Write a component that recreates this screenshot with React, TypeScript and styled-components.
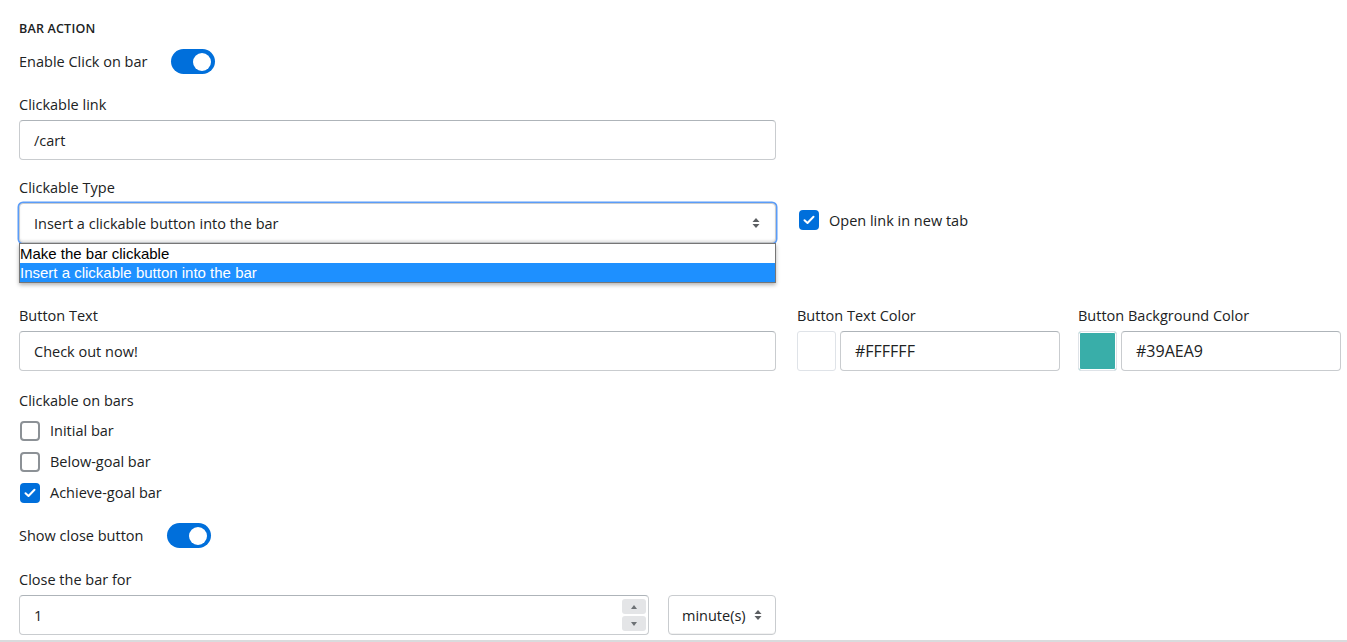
import styled, { createGlobalStyle } from 'styled-components';

const GlobalStyle = createGlobalStyle`
  html, body {
    margin: 0;
    padding: 0;
    background: #ffffff;
  }
  body {
    font-family: "Open Sans", "Noto Sans", sans-serif;
    font-size: 14.5px;
    color: #202223;
  }
  * {
    box-sizing: border-box;
  }
`;

const BLUE = '#006fdb';

function App() {
  return (
    <>
      <GlobalStyle />
      <Page>
        <Heading>BAR ACTION</Heading>

        <ToggleRow $top={12}>
          <span>Enable Click on bar</span>
          <Toggle $on />
        </ToggleRow>

        <Field $top={21} $width={757}>
          <Label>Clickable link</Label>
          <TextBox>/cart</TextBox>
        </Field>

        <TypeRow>
          <Field $width={757}>
            <Label>Clickable Type</Label>
            <SelectWrap>
              <Select $focused>
                <span>Insert a clickable button into the bar</span>
                <Caret />
              </Select>
              <Dropdown>
                <Option>Make the bar clickable</Option>
                <Option $active>Insert a clickable button into the bar</Option>
              </Dropdown>
            </SelectWrap>
          </Field>
          <InlineCheck>
            <Check $checked>
              <Tick />
            </Check>
            <span>Open link in new tab</span>
          </InlineCheck>
        </TypeRow>

        <ButtonRow>
          <Field>
            <Label>Button Text</Label>
            <TextBox>Check out now!</TextBox>
          </Field>
          <Field>
            <Label>Button Text Color</Label>
            <ColorPair>
              <Swatch $color="#FFFFFF" />
              <ColorText>#FFFFFF</ColorText>
            </ColorPair>
          </Field>
          <Field>
            <Label>Button Background Color</Label>
            <ColorPair>
              <Swatch $color="#39AEA9" />
              <ColorText>#39AEA9</ColorText>
            </ColorPair>
          </Field>
        </ButtonRow>

        <Field $top={20}>
          <Label>Clickable on bars</Label>
          <CheckList>
            <CheckItem>
              <Check />
              <span>Initial bar</span>
            </CheckItem>
            <CheckItem>
              <Check />
              <span>Below-goal bar</span>
            </CheckItem>
            <CheckItem>
              <Check $checked>
                <Tick />
              </Check>
              <span>Achieve-goal bar</span>
            </CheckItem>
          </CheckList>
        </Field>

        <ToggleRow $top={15}>
          <span>Show close button</span>
          <Toggle $on />
        </ToggleRow>

        <Field $top={22} $width={757}>
          <Label>Close the bar for</Label>
          <DurationRow>
            <NumberBox>
              <span>1</span>
              <Spinner>
                <SpinButton>
                  <Arrow $dir="up" />
                </SpinButton>
                <SpinButton>
                  <Arrow $dir="down" />
                </SpinButton>
              </Spinner>
            </NumberBox>
            <UnitSelect>
              <span>minute(s)</span>
              <Caret />
            </UnitSelect>
          </DurationRow>
        </Field>
      </Page>
      <Divider />
    </>
  );
}

function Caret() {
  return (
    <CaretSvg width="8" height="12" viewBox="0 0 8 12">
      <path d="M4 1 L7.5 5 H0.5 Z" fill="#5c5f62" />
      <path d="M4 11 L7.5 7 H0.5 Z" fill="#5c5f62" />
    </CaretSvg>
  );
}

function Tick() {
  return (
    <svg width="12" height="10" viewBox="0 0 12 10">
      <path d="M1.5 5.2 L4.5 8 L10.5 1.8" fill="none" stroke="#ffffff" strokeWidth="2" strokeLinecap="round" strokeLinejoin="round" />
    </svg>
  );
}

export default App;

const Page = styled.div`
  padding: 21px 0 0 19px;
  width: 1347px;
  display: flex;
  flex-direction: column;
`;

const Heading = styled.div`
  font-size: 12.5px;
  font-weight: 600;
  letter-spacing: 0.2px;
  line-height: 16px;
  color: #202223;
`;

const ToggleRow = styled.div<{ $top?: number }>`
  display: flex;
  align-items: center;
  gap: 24px;
  height: 25px;
  margin-top: ${(p) => p.$top ?? 0}px;
`;

const Toggle = styled.div<{ $on?: boolean }>`
  position: relative;
  width: 44px;
  height: 25px;
  border-radius: 13px;
  background: ${(p) => (p.$on ? BLUE : '#babfc3')};
  &::after {
    content: '';
    position: absolute;
    top: 3.5px;
    left: ${(p) => (p.$on ? '22px' : '4px')};
    width: 18px;
    height: 18px;
    border-radius: 50%;
    background: #ffffff;
  }
`;

const Field = styled.div<{ $top?: number; $width?: number }>`
  display: flex;
  flex-direction: column;
  margin-top: ${(p) => p.$top ?? 0}px;
  width: ${(p) => (p.$width ? `${p.$width}px` : 'auto')};
`;

const Label = styled.div`
  line-height: 20px;
  margin-bottom: 5px;
  color: #202223;
`;

const TextBox = styled.div`
  height: 40px;
  display: flex;
  align-items: center;
  padding: 0 14px;
  border: 1px solid #c9cccf;
  border-top-color: #aeb4b9;
  border-radius: 4px;
  background: #ffffff;
`;

const TypeRow = styled.div`
  display: flex;
  align-items: flex-start;
  gap: 23px;
  margin-top: 18px;
  height: 128px;
`;

const SelectWrap = styled.div`
  position: relative;
`;

const Select = styled.div<{ $focused?: boolean }>`
  height: 40px;
  display: flex;
  align-items: center;
  justify-content: space-between;
  padding: 0 15px 0 14px;
  border: 1px solid #c9cccf;
  border-radius: 4px;
  background: #ffffff;
  box-shadow: ${(p) =>
    p.$focused ? '0 0 0 1.5px #5a9cf8, inset 0 -2px 2px rgba(0,0,0,0.08)' : 'inset 0 -1px 0 rgba(0,0,0,0.05)'};
`;

const CaretSvg = styled.svg`
  flex: none;
`;

const Dropdown = styled.div`
  position: absolute;
  top: 40px;
  left: 0;
  right: 0;
  background: #ffffff;
  border: 1px solid #767676;
  box-shadow: 0 2px 4px rgba(0, 0, 0, 0.3);
  font-family: "Liberation Sans", Arial, sans-serif;
  font-size: 15px;
  color: #000000;
  z-index: 2;
`;

const Option = styled.div<{ $active?: boolean }>`
  height: 19px;
  line-height: 19px;
  padding-left: 0;
  background: ${(p) => (p.$active ? '#1e90ff' : '#ffffff')};
  color: ${(p) => (p.$active ? '#ffffff' : '#000000')};
`;

const InlineCheck = styled.div`
  display: flex;
  align-items: center;
  gap: 10px;
  margin-top: 32px;
`;

const Check = styled.div<{ $checked?: boolean }>`
  width: 20px;
  height: 20px;
  flex: none;
  border-radius: 4px;
  display: flex;
  align-items: center;
  justify-content: center;
  background: ${(p) => (p.$checked ? BLUE : '#ffffff')};
  border: ${(p) => (p.$checked ? 'none' : '2px solid #8c9196')};
`;

const ButtonRow = styled.div`
  display: grid;
  grid-template-columns: 757px 21px 263px 18px 263px;
  & > :nth-child(1) {
    grid-column: 1;
  }
  & > :nth-child(2) {
    grid-column: 3;
  }
  & > :nth-child(3) {
    grid-column: 5;
  }
`;

const ColorPair = styled.div`
  display: flex;
  gap: 4px;
`;

const Swatch = styled.div<{ $color: string }>`
  width: 39px;
  height: 40px;
  flex: none;
  border-radius: 3px;
  border: 1px solid #dfe3e8;
  background: ${(p) => p.$color};
  box-shadow: inset 0 0 0 1px #ffffff;
`;

const ColorText = styled(TextBox)`
  flex: 1;
  font-size: 16px;
`;

const CheckList = styled.div`
  display: flex;
  flex-direction: column;
  margin-top: -1px;
`;

const CheckItem = styled.div`
  display: flex;
  align-items: center;
  gap: 10px;
  height: 31px;
  padding-left: 1px;
`;

const DurationRow = styled.div`
  display: flex;
  gap: 19px;
`;

const NumberBox = styled(TextBox)`
  flex: 1;
  justify-content: space-between;
  padding-right: 2px;
`;

const Spinner = styled.div`
  display: flex;
  flex-direction: column;
  gap: 2px;
`;

const SpinButton = styled.div`
  width: 24px;
  height: 15px;
  border-radius: 3px;
  background: #e4e5e7;
  display: flex;
  align-items: center;
  justify-content: center;
`;

const Arrow = styled.div<{ $dir: 'up' | 'down' }>`
  width: 0;
  height: 0;
  border-left: 3.5px solid transparent;
  border-right: 3.5px solid transparent;
  ${(p) =>
    p.$dir === 'up' ? 'border-bottom: 4px solid #6d7175;' : 'border-top: 4px solid #6d7175;'}
`;

const UnitSelect = styled(Select)`
  width: 108px;
  flex: none;
  padding: 0 13px 0 13px;
`;

const Divider = styled.div`
  margin-top: 5px;
  height: 2px;
  background: #d9dbdd;
  width: 1347px;
`;
